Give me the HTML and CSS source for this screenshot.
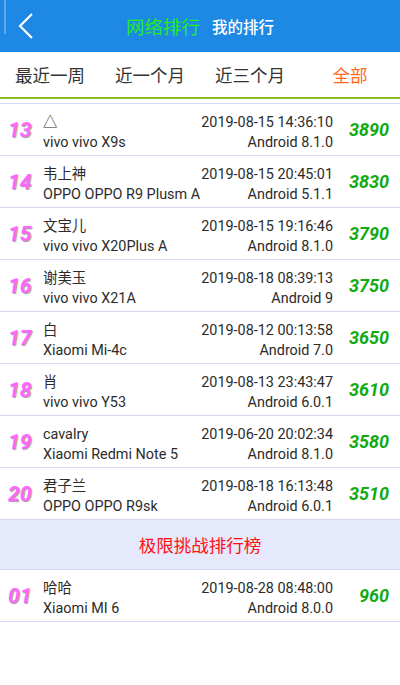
FILE: index.html
```html
<!DOCTYPE html>
<html>
<head>
<meta charset="utf-8">
<link rel="stylesheet" href="styles.css">
</head>
<body>
<div class="header">
  <div class="edge"></div>
  <svg class="back" width="16" height="26" viewBox="0 0 16 26"><path d="M14 1 L2 13 L14 25" fill="none" stroke="#fff" stroke-width="2.2"/></svg>
  <div class="title-on">网络排行</div>
  <div class="title-off">我的排行</div>
</div>
<div class="tabs">
  <div class="tab">最近一周</div>
  <div class="tab">近一个月</div>
  <div class="tab">近三个月</div>
  <div class="tab active">全部</div>
</div>
<div class="list">
  <div class="row"><div class="rank">13</div><div class="info"><div class="name">△</div><div class="dev">vivo vivo X9s</div></div><div class="meta"><div>2019-08-15 14:36:10</div><div>Android 8.1.0</div></div><div class="score">3890</div></div>
  <div class="row"><div class="rank">14</div><div class="info"><div class="name">韦上神</div><div class="dev">OPPO OPPO R9 Plusm A</div></div><div class="meta"><div>2019-08-15 20:45:01</div><div>Android 5.1.1</div></div><div class="score">3830</div></div>
  <div class="row"><div class="rank">15</div><div class="info"><div class="name">文宝儿</div><div class="dev">vivo vivo X20Plus A</div></div><div class="meta"><div>2019-08-15 19:16:46</div><div>Android 8.1.0</div></div><div class="score">3790</div></div>
  <div class="row"><div class="rank">16</div><div class="info"><div class="name">谢美玉</div><div class="dev">vivo vivo X21A</div></div><div class="meta"><div>2019-08-18 08:39:13</div><div>Android 9</div></div><div class="score">3750</div></div>
  <div class="row"><div class="rank">17</div><div class="info"><div class="name">白</div><div class="dev">Xiaomi Mi-4c</div></div><div class="meta"><div>2019-08-12 00:13:58</div><div>Android 7.0</div></div><div class="score">3650</div></div>
  <div class="row"><div class="rank">18</div><div class="info"><div class="name">肖</div><div class="dev">vivo vivo Y53</div></div><div class="meta"><div>2019-08-13 23:43:47</div><div>Android 6.0.1</div></div><div class="score">3610</div></div>
  <div class="row"><div class="rank">19</div><div class="info"><div class="name">cavalry</div><div class="dev">Xiaomi Redmi Note 5</div></div><div class="meta"><div>2019-06-20 20:02:34</div><div>Android 8.1.0</div></div><div class="score">3580</div></div>
  <div class="row"><div class="rank">20</div><div class="info"><div class="name">君子兰</div><div class="dev">OPPO OPPO R9sk</div></div><div class="meta"><div>2019-08-18 16:13:48</div><div>Android 6.0.1</div></div><div class="score">3510</div></div>
  <div class="banner">极限挑战排行榜</div>
  <div class="row"><div class="rank">01</div><div class="info"><div class="name">哈哈</div><div class="dev">Xiaomi MI 6</div></div><div class="meta"><div>2019-08-28 08:48:00</div><div>Android 8.0.0</div></div><div class="score">960</div></div>
</div>
</body>
</html>
```
FILE: styles.css
```css
html, body {
  margin: 0;
  padding: 0;
  background: #fff;
  font-family: Roboto, "Noto Sans CJK SC", sans-serif;
}
body {
  width: 400px;
  height: 685px;
  overflow: hidden;
}
.header {
  height: 52px;
  background: #1e88e5;
  display: flex;
  align-items: center;
}
.edge {
  align-self: flex-start;
  width: 2px;
  height: 34px;
  margin-left: 4px;
  background: #5ea8ee;
}
.back {
  margin-left: 12px;
  margin-top: 0;
}
.title-on {
  margin-left: 92px;
  color: #22ee22;
  font-size: 18.5px;
}
.title-off {
  margin-left: 12px;
  color: #fff;
  font-size: 15.5px;
  font-weight: 500;
}
.tabs {
  height: 45px;
  display: flex;
  border-bottom: 2px solid #88c020;
}
.tab {
  width: 100px;
  display: flex;
  align-items: center;
  justify-content: center;
  font-size: 17.5px;
  color: #333;
}
.tab.active {
  color: #ff6a1a;
}
.list {
  margin-top: 4px;
  border-top: 1px solid #d6d9f6;
}
.row {
  height: 51px;
  border-bottom: 1px solid #d6d9f6;
  display: flex;
  align-items: center;
}
.rank {
  width: 43px;
  padding-left: 8px;
  box-sizing: border-box;
  font-size: 21px;
  font-weight: 700;
  font-style: italic;
  color: #ff66ff;
  text-shadow: 1px 1px 1px #999;
}
.info, .meta {
  font-size: 14.4px;
  line-height: 20px;
  color: #2b2b2b;
  padding-top: 7px;
}
.info {
  flex: 1;
  white-space: nowrap;
}
.meta {
  text-align: right;
}
.score {
  width: 67px;
  padding-right: 11px;
  box-sizing: border-box;
  text-align: right;
  font-size: 18px;
  font-weight: 700;
  font-style: italic;
  color: #11aa11;
}
.banner {
  height: 49px;
  background: #e6e8fc;
  border-bottom: 1px solid #d6d9f6;
  display: flex;
  align-items: center;
  justify-content: center;
  color: #ff1111;
  font-size: 17.5px;
}
```
